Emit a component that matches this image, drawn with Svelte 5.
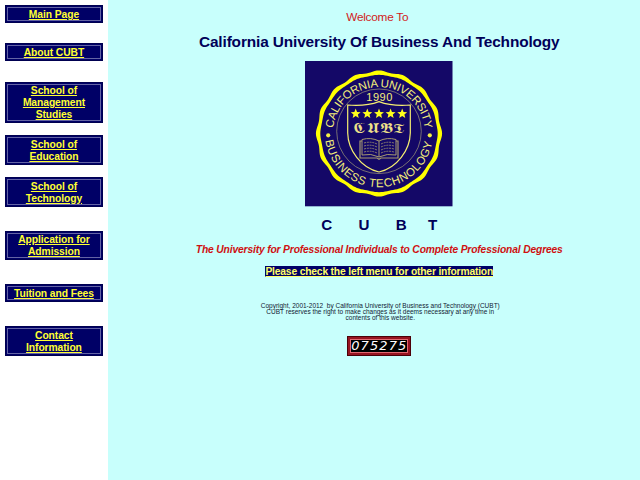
<script>
  const menu = [
    { lines: ['Main Page'], gap: 0 },
    { lines: ['About CUBT'], gap: 20.5 },
    { lines: ['School of', 'Management', 'Studies'], gap: 21 },
    { lines: ['School of', 'Education'], gap: 12 },
    { lines: ['School of', 'Technology'], gap: 12.5 },
    { lines: ['Application for', 'Admission'], gap: 24 },
    { lines: ['Tuition and Fees'], gap: 24 },
    { lines: ['Contact', 'Information'], gap: 24.5 }
  ];

  function wave(radius, depth) {
    const pts = [];
    for (let i = 0; i < 360; i += 2) {
      const a = (i * Math.PI) / 180;
      const r = radius + depth * Math.cos(16 * a);
      pts.push(`${(379 + r * Math.cos(a)).toFixed(2)},${(133.5 + r * Math.sin(a)).toFixed(2)}`);
    }
    return pts.join(' ');
  }

  function star(cx, cy) {
    const pts = [];
    for (let i = 0; i < 10; i++) {
      const a = ((i * 36 - 90) * Math.PI) / 180;
      const r = i % 2 ? 2.3 : 5.2;
      pts.push(`${(cx + r * Math.cos(a)).toFixed(2)},${(cy + r * Math.sin(a)).toFixed(2)}`);
    }
    return pts.join(' ');
  }

  const stars = [355.7, 367.3, 379, 390.6, 402.2];
  const crest = [
    { glyph: '𝕮', x: 359.5 },
    { glyph: '𝖀', x: 372.7 },
    { glyph: '𝕭', x: 385.8 },
    { glyph: '𝕿', x: 398.8 }
  ];
</script>

<div class="page">
  <nav>
    {#each menu as item}
      <a class="button" href="#top" style="margin-top: {item.gap}px">
        {#each item.lines as line}<span>{line}</span>{/each}
      </a>
    {/each}
  </nav>
  <main>
    <p class="welcome">Welcome To</p>
    <h1>California University Of Business And Technology</h1>
    <svg class="seal" viewBox="305 61 148 146" width="148" height="146">
      <defs>
        <path id="arc-top" d="M333.26 128.2A46 46 0 0 1 424.74 128.2" />
        <path id="arc-bottom" d="M325.5 140.5A54 54 0 0 0 432.5 140.5" />
      </defs>
      <rect x="305" y="61" width="147.5" height="145.3" fill="#140867" />
      <polygon points={wave(62.2, 0.9)} fill="#ffff00" />
      <polygon points={wave(58.4, 0.3)} fill="#140867" />
      <circle cx="379" cy="131.3" r="42.3" fill="none" stroke="#a19b79" stroke-width=".7" />
      <text class="ring" font-size="11.4"><textPath href="#arc-top" textLength="135" lengthAdjust="spacing">CALIFORNIA UNIVERSITY</textPath></text>
      <text class="ring" font-size="11.5"><textPath href="#arc-bottom" textLength="153" lengthAdjust="spacing">BUSINESS TECHNOLOGY</textPath></text>
      <circle cx="328.2" cy="135.3" r="2.1" fill="#f5f046" />
      <circle cx="429.8" cy="135.3" r="2.1" fill="#f5f046" />
      <text class="ring" x="366.3" y="100.8" font-size="11" textLength="26">1990</text>
      <path d="M347.7 105Q366 106.5 379 101.6Q392 106.5 410.3 105V133C410 150 397 168 379 172C361 168 348 150 347.7 133Z" fill="#140867" stroke="#f5ee70" stroke-width="1.2" />
      {#each stars as x}<polygon points={star(x, 113.8)} fill="#ffff1c" />{/each}
      {#each crest as letter}
        <text class="crest" transform="translate({letter.x} 133) scale(1.3 1)">{letter.glyph}</text>
      {/each}
      <g fill="none" stroke="#a79b70">
        <path d="M362 139.5Q371 137 379 141Q387 137 396 139.5V155Q387 153 379 157Q371 153 362 155ZM379 141V157" stroke-width="1" />
        <path d="M362 141H360V158H377L379 159.3L381 158H398V141H396" stroke-width="1.2" />
        <path d="M364 143Q371 141 377 144M364 146Q371 144 377 147M364 149Q371 147 377 150M364 152Q371 150 377 153M381 144Q387 141 394 143M381 147Q387 144 394 146M381 150Q387 147 394 149M381 153Q387 150 394 152" stroke-width=".8" stroke-dasharray="2 .8" />
      </g>
    </svg>
    <div class="letters"><span>C</span><span>U</span><span>B</span><span>T</span></div>
    <p class="motto">The University for Professional Individuals to Complete Professional Degrees</p>
    <p class="notice"><span>Please check the left menu for other information</span></p>
    <p class="copy">Copyright, 2001-2012&nbsp; by California University of Business and Technology (CUBT)<br />CUBT reserves the right to make changes as it deems necessary at any time in<br />contents of this website.</p>
    <div class="counter"><div>075275</div></div>
  </main>
</div>

<style>
  :global(body) { margin: 0; }
  .page {
    display: flex;
    width: 640px;
    height: 480px;
    overflow: hidden;
    background: #c8fffc;
    font-family: "Liberation Sans", Arial, sans-serif;
  }
  nav {
    flex: none;
    box-sizing: border-box;
    width: 107.5px;
    padding: 5.4px 4.8px 0 5.2px;
    background: #fff;
  }
  .button {
    display: flex;
    flex-direction: column;
    align-items: center;
    box-sizing: border-box;
    padding: 2.3px 0 1.2px;
    border: 1px solid #000050;
    outline: 1px solid #6464a4;
    outline-offset: -3px;
    background: #000066;
    color: #ffff33;
    font: bold 10.3px/12px "Liberation Sans", Arial, sans-serif;
    letter-spacing: -.08px;
    text-decoration: none;
  }
  .button span { text-decoration: underline; }
  main {
    flex: 1;
    display: flex;
    flex-direction: column;
    align-items: center;
    padding-right: 1px;
    margin-left: 12px;
  }
  p, h1 { margin: 0; white-space: nowrap; }
  .welcome { margin-top: 10px; margin-right: 4px; color: #d21a1a; font-size: 11.8px; line-height: 14px; letter-spacing: -.25px; }
  h1 { margin-top: 9px; color: #000058; font-size: 15.4px; line-height: 18px; letter-spacing: -.13px; }
  .seal { display: block; margin-top: 10px; }
  .ring { fill: #f4f07a; font-family: "Liberation Sans", Arial, sans-serif; }
  .crest { fill: #eee08a; font: 14px "DejaVu Sans", serif; text-anchor: middle; }
  .letters {
    display: flex;
    justify-content: space-between;
    width: 116px;
    margin-top: 9px;
    color: #000058;
    font: bold 15.2px/18px "Liberation Sans", Arial, sans-serif;
  }
  .letters span:nth-child(3) { margin-right: -5px; }
  .motto { margin-top: 10px; color: #cf1111; font-size: 10.3px; line-height: 12px; letter-spacing: -.165px; font-weight: bold; font-style: italic; }
  .notice { margin-top: 10px; color: #ffff66; font-size: 10.3px; line-height: 12px; letter-spacing: -.18px; font-weight: bold; }
  .notice span { background: #000066; text-decoration: underline; }
  .copy { margin-top: 25px; margin-left: 2px; color: #123; font-size: 6.5px; line-height: 5.8px; text-align: center; }
  .counter {
    box-sizing: border-box;
    width: 64px;
    height: 20px;
    margin-top: 15.3px;
    padding: 2px;
    border: 1px solid #4c0008;
    background: #961420;
  }
  .counter div {
    box-sizing: border-box;
    height: 14px;
    border: 1px solid #e06870;
    background: #000;
    color: #fff;
    font: italic 13px/12px "DejaVu Sans", sans-serif;
    letter-spacing: 1.1px;
    text-align: center;
  }
</style>
